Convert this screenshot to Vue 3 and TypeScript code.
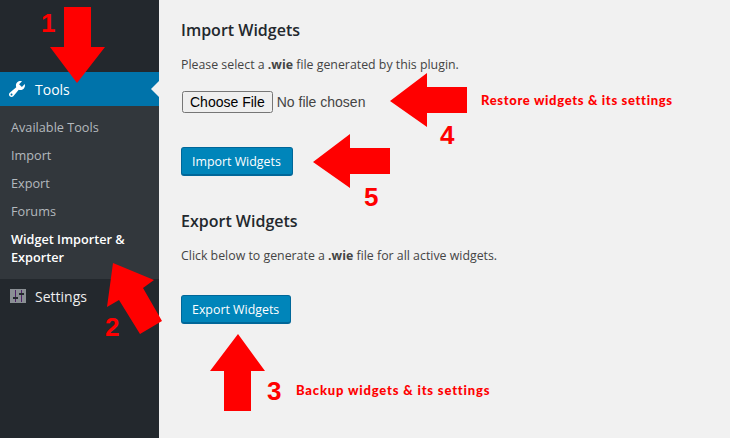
<script setup lang="ts">
const subItems = ['Available Tools', 'Import', 'Export', 'Forums'];

const arrows: string[] = [
  '64,7 91,7 91,47 105,47 77,83 50,47 64,47',
  '113,263 154,280 143,288 162,321 140,334 119,300 107,307',
  '238,334 265,371 251,371 251,411 224,411 224,371 210,371',
  '390,101 427,73 427,87 467,87 467,113 427,113 427,127',
  '313,162 350,134 350,148 390,148 390,174 350,174 350,188',
];

const numbers = [
  { text: '1', cls: 'n1' },
  { text: '2', cls: 'n2' },
  { text: '3', cls: 'n3' },
  { text: '4', cls: 'n4' },
  { text: '5', cls: 'n5' },
];
</script>

<template>
  <div class="page">
    <aside class="sidebar">
      <div class="current">
        <svg class="icon" viewBox="0 0 20 20" width="20" height="20">
          <path fill="#fff" d="M16.68 9.77c-1.34 1.34-3.3 1.67-4.95.99l-5.41 6.52c-.99.99-2.59.99-3.58 0s-.99-2.59 0-3.57l6.52-5.42c-.68-1.65-.35-3.61.99-4.95 1.28-1.28 3.12-1.62 4.72-1.06l-2.89 2.89 2.82 2.82 2.86-2.87c.53 1.58.18 3.39-1.08 4.65zM3.81 16.21c.4.39 1.04.39 1.43 0 .4-.4.4-1.04 0-1.43-.39-.4-1.03-.4-1.43 0-.39.39-.39 1.03 0 1.43z" />
        </svg>
        <span>Tools</span>
        <i class="notch"></i>
      </div>
      <ul class="submenu">
        <li v-for="item in subItems" :key="item">{{ item }}</li>
        <li class="active">Widget Importer &amp; Exporter</li>
      </ul>
      <div class="menu-item">
        <svg class="icon" viewBox="0 0 16 14" width="16" height="14">
          <rect width="16" height="14" fill="#8a8f94" />
          <rect x="5" y="1" width="1" height="12" fill="#4f2468" />
          <rect x="11" y="1" width="1" height="12" fill="#4f2468" />
          <rect x="3" y="8" width="5" height="2" fill="#23282d" />
          <rect x="9" y="4" width="5" height="2" fill="#23282d" />
        </svg>
        <span>Settings</span>
      </div>
    </aside>

    <main class="content">
      <h2>Import Widgets</h2>
      <p>Please select a <b>.wie</b> file generated by this plugin.</p>
      <input class="file" type="file" />
      <button class="primary import">Import Widgets</button>
      <h2 class="export-title">Export Widgets</h2>
      <p>Click below to generate a <b>.wie</b> file for all active widgets.</p>
      <button class="primary export">Export Widgets</button>
    </main>

    <!-- red annotations painted on top of the screenshot -->
    <svg class="arrows" viewBox="0 0 730 438" width="730" height="438">
      <polygon v-for="p in arrows" :key="p" :points="p" fill="#ff0000" />
    </svg>
    <span v-for="n in numbers" :key="n.text" class="num" :class="n.cls">{{ n.text }}</span>
    <span class="note note-restore">Restore widgets &amp; its settings</span>
    <span class="note note-backup">Backup widgets &amp; its settings</span>
  </div>
</template>

<style scoped>
.page {
  position: relative;
  display: flex;
  width: 730px;
  height: 438px;
  overflow: hidden;
  background: #f1f1f1;
  font-family: "Open Sans", sans-serif;
  font-size: 13px;
  color: #444;
}
.sidebar {
  width: 159px;
  flex-shrink: 0;
  padding-top: 72px;
  background: #23282d;
  box-sizing: border-box;
}
.current,
.menu-item {
  display: flex;
  align-items: center;
  height: 34px;
  padding-left: 7px;
  position: relative;
  font-size: 14px;
  color: #eee;
}
.current {
  background: #0073aa;
  color: #fff;
}
.icon {
  margin-right: 8px;
  flex-shrink: 0;
}
.menu-item .icon {
  margin-left: 3px;
  margin-right: 9px;
}
.notch {
  position: absolute;
  right: 0;
  top: 9px;
  border: 8px solid transparent;
  border-right-color: #f1f1f1;
  border-left-width: 0;
}
.submenu {
  list-style: none;
  margin: 0;
  padding: 7px 0 8px;
  background: #32373c;
  color: #b4b9be;
  font-size: 12.7px;
}
.submenu li {
  padding: 5px 12px 5px 11px;
  line-height: 18px;
}
.submenu .active {
  color: #fff;
  font-weight: 600;
}
.content {
  flex: 1;
  padding: 21px 0 0 22px;
}
h2 {
  margin: 0;
  font-size: 16px;
  line-height: 18px;
  font-weight: 600;
  color: #23282d;
}
p {
  margin: 16px 0 0;
  line-height: 20px;
  font-size: 12.35px;
}
.file {
  display: block;
  margin: 16px 0 0 1px;
  font-family: "Liberation Sans", sans-serif;
  font-size: 14px;
  color: #444;
}
.primary {
  display: block;
  height: 29px;
  padding: 0 11px 0 10px;
  font-family: inherit;
  font-size: 12.4px;
  color: #fff;
  background: #0085ba;
  border: 1px solid #006799;
  border-bottom-width: 2px;
  border-radius: 3px;
}
.import {
  margin-top: 34px;
}
.export-title {
  margin-top: 36px;
}
.export {
  margin-top: 29px;
}
.arrows {
  position: absolute;
  left: 0;
  top: 0;
}
.num {
  position: absolute;
  font-family: "Liberation Sans", sans-serif;
  font-size: 26px;
  line-height: 26px;
  font-weight: 700;
  color: #ff0000;
}
.n1 { left: 41px; top: 10px; }
.n2 { left: 105px; top: 314px; }
.n3 { left: 267px; top: 378px; }
.n4 { left: 440px; top: 122px; }
.n5 { left: 364px; top: 184px; }
.note {
  position: absolute;
  font-family: "Lato", sans-serif;
  font-size: 13px;
  line-height: 16px;
  font-weight: 900;
  color: #ff0000;
  white-space: nowrap;
}
.note-restore { left: 481px; top: 92px; letter-spacing: 0.66px; }
.note-backup { left: 296px; top: 382px; letter-spacing: 0.82px; }
</style>

<style>
html,
body {
  margin: 0;
  background: #f1f1f1;
}
</style>
